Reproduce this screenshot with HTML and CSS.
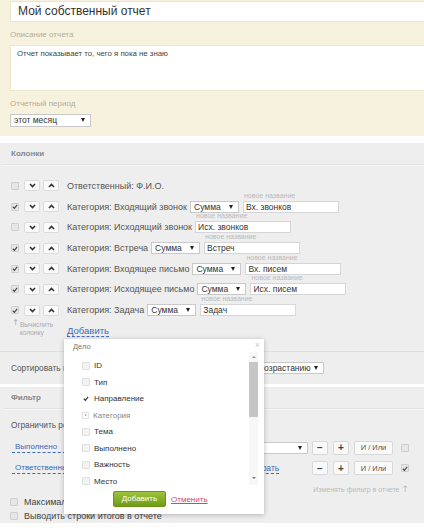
FILE: index.html
```html
<!DOCTYPE html>
<html>
<head>
  <meta charset="utf-8">
  <title>Мой собственный отчет</title>
  <link rel="stylesheet" href="styles.css">
</head>
<body>
<div class="page">

  <div class="report-head">
    <div class="title-field">Мой собственный отчет</div>
    <div class="field-label">Описание отчета</div>
    <div class="textarea">Отчет показывает то, чего я пока не знаю</div>
    <div class="field-label">Отчетный период</div>
    <div class="select period-select">этот месяц</div>
  </div>

  <div class="panel">
    <div class="panel-title">Колонки</div>
    <div class="column-list">
      <div class="column-row">
        <span class="check"></span>
        <span class="move-btn"><svg width="7" height="5" viewBox="0 0 7 5"><path d="M1 1l2.5 2.5L6 1" fill="none" stroke="#333" stroke-width="1.6"/></svg></span>
        <span class="move-btn"><svg width="7" height="5" viewBox="0 0 7 5"><path d="M1 4l2.5-2.5L6 4" fill="none" stroke="#333" stroke-width="1.6"/></svg></span>
        <span class="column-name">Ответственный: Ф.И.О.</span>
      </div>
      <div class="column-row">
        <span class="check checked"><svg width="7" height="7" viewBox="0 0 7 7"><path d="M1 3.8l1.8 1.8L6 1.5" fill="none" stroke="#444" stroke-width="1.3"/></svg></span>
        <span class="move-btn"><svg width="7" height="5" viewBox="0 0 7 5"><path d="M1 1l2.5 2.5L6 1" fill="none" stroke="#333" stroke-width="1.6"/></svg></span>
        <span class="move-btn"><svg width="7" height="5" viewBox="0 0 7 5"><path d="M1 4l2.5-2.5L6 4" fill="none" stroke="#333" stroke-width="1.6"/></svg></span>
        <span class="column-name">Категория: Входящий звонок</span>
        <span class="select agg-select">Сумма</span>
        <span class="rename"><span class="rename-hint">новое название</span><span class="text-input">Вх. звонков</span></span>
      </div>
      <div class="column-row">
        <span class="check"></span>
        <span class="move-btn"><svg width="7" height="5" viewBox="0 0 7 5"><path d="M1 1l2.5 2.5L6 1" fill="none" stroke="#333" stroke-width="1.6"/></svg></span>
        <span class="move-btn"><svg width="7" height="5" viewBox="0 0 7 5"><path d="M1 4l2.5-2.5L6 4" fill="none" stroke="#333" stroke-width="1.6"/></svg></span>
        <span class="column-name">Категория: Исходящий звонок</span>
        <span class="rename"><span class="rename-hint">новое название</span><span class="text-input">Исх. звонков</span></span>
      </div>
      <div class="column-row">
        <span class="check checked"><svg width="7" height="7" viewBox="0 0 7 7"><path d="M1 3.8l1.8 1.8L6 1.5" fill="none" stroke="#444" stroke-width="1.3"/></svg></span>
        <span class="move-btn"><svg width="7" height="5" viewBox="0 0 7 5"><path d="M1 1l2.5 2.5L6 1" fill="none" stroke="#333" stroke-width="1.6"/></svg></span>
        <span class="move-btn"><svg width="7" height="5" viewBox="0 0 7 5"><path d="M1 4l2.5-2.5L6 4" fill="none" stroke="#333" stroke-width="1.6"/></svg></span>
        <span class="column-name">Категория: Встреча</span>
        <span class="select agg-select">Сумма</span>
        <span class="rename"><span class="rename-hint">новое название</span><span class="text-input">Встреч</span></span>
      </div>
      <div class="column-row">
        <span class="check checked"><svg width="7" height="7" viewBox="0 0 7 7"><path d="M1 3.8l1.8 1.8L6 1.5" fill="none" stroke="#444" stroke-width="1.3"/></svg></span>
        <span class="move-btn"><svg width="7" height="5" viewBox="0 0 7 5"><path d="M1 1l2.5 2.5L6 1" fill="none" stroke="#333" stroke-width="1.6"/></svg></span>
        <span class="move-btn"><svg width="7" height="5" viewBox="0 0 7 5"><path d="M1 4l2.5-2.5L6 4" fill="none" stroke="#333" stroke-width="1.6"/></svg></span>
        <span class="column-name">Категория: Входящее письмо</span>
        <span class="select agg-select">Сумма</span>
        <span class="rename"><span class="rename-hint">новое название</span><span class="text-input">Вх. писем</span></span>
      </div>
      <div class="column-row">
        <span class="check checked"><svg width="7" height="7" viewBox="0 0 7 7"><path d="M1 3.8l1.8 1.8L6 1.5" fill="none" stroke="#444" stroke-width="1.3"/></svg></span>
        <span class="move-btn"><svg width="7" height="5" viewBox="0 0 7 5"><path d="M1 1l2.5 2.5L6 1" fill="none" stroke="#333" stroke-width="1.6"/></svg></span>
        <span class="move-btn"><svg width="7" height="5" viewBox="0 0 7 5"><path d="M1 4l2.5-2.5L6 4" fill="none" stroke="#333" stroke-width="1.6"/></svg></span>
        <span class="column-name">Категория: Исходящее письмо</span>
        <span class="select agg-select">Сумма</span>
        <span class="rename"><span class="rename-hint">новое название</span><span class="text-input">Исх. писем</span></span>
      </div>
      <div class="column-row">
        <span class="check checked"><svg width="7" height="7" viewBox="0 0 7 7"><path d="M1 3.8l1.8 1.8L6 1.5" fill="none" stroke="#444" stroke-width="1.3"/></svg></span>
        <span class="move-btn"><svg width="7" height="5" viewBox="0 0 7 5"><path d="M1 1l2.5 2.5L6 1" fill="none" stroke="#333" stroke-width="1.6"/></svg></span>
        <span class="move-btn"><svg width="7" height="5" viewBox="0 0 7 5"><path d="M1 4l2.5-2.5L6 4" fill="none" stroke="#333" stroke-width="1.6"/></svg></span>
        <span class="column-name">Категория: Задача</span>
        <span class="select agg-select">Сумма</span>
        <span class="rename"><span class="rename-hint">новое название</span><span class="text-input">Задач</span></span>
      </div>
    </div>

    <div class="column-footer">
      <div class="calc-hint">
        <span class="hint-arrow">↑</span>
        <span>Вычислить колонку</span>
      </div>
      <a class="dashed-link add-link">Добавить</a>
    </div>

    <div class="sort-row">
      <span>Сортировать по</span>
      <span class="select sort-field"></span>
      <span class="select sort-dir">по возрастанию</span>
    </div>
  </div>

  <div class="panel filter-panel">
    <div class="panel-title">Фильтр</div>
    <div class="filter-intro">Ограничить результаты отчета</div>
    <div class="filter-row">
      <a class="dashed-link filter-field">Выполнено</a>
      <span class="select filter-value"></span>
      <span class="op-btn">−</span>
      <span class="op-btn">+</span>
      <span class="op-btn andor">И / Или</span>
      <span class="check"></span>
    </div>
    <div class="filter-row">
      <a class="dashed-link filter-field">Ответственный</a>
      <span class="filter-value plain"><a class="dashed-link">Выбрать</a></span>
      <span class="op-btn">−</span>
      <span class="op-btn">+</span>
      <span class="op-btn andor">И / Или</span>
      <span class="check checked"><svg width="7" height="7" viewBox="0 0 7 7"><path d="M1 3.8l1.8 1.8L6 1.5" fill="none" stroke="#444" stroke-width="1.3"/></svg></span>
    </div>
    <div class="filter-hint">Изменять фильтр в отчете <span class="hint-arrow">↑</span></div>
    <div class="option-row"><span class="check"></span>Максимальное количество строк</div>
    <div class="option-row"><span class="check"></span>Выводить строки итогов в отчете</div>
  </div>

  <div class="picker">
    <div class="picker-title">Дело</div>
    <span class="picker-close">×</span>
    <div class="picker-body">
      <ul class="picker-list">
        <li><span class="check light"></span>ID</li>
        <li><span class="check light"></span>Тип</li>
        <li><span class="check bare"><svg width="7" height="7" viewBox="0 0 7 7"><path d="M1 3.8l1.8 1.8L6 1.5" fill="none" stroke="#333" stroke-width="1.3"/></svg></span>Направление</li>
        <li class="group"><span class="expander"></span>Категория</li>
        <li><span class="check light"></span>Тема</li>
        <li><span class="check light"></span>Выполнено</li>
        <li><span class="check light"></span>Важность</li>
        <li><span class="check light"></span>Место</li>
      </ul>
      <div class="scrollbar">
        <span class="scroll-up"></span>
        <span class="scroll-thumb"></span>
        <span class="scroll-down"></span>
      </div>
    </div>
    <div class="picker-actions">
      <span class="green-btn">Добавить</span>
      <a class="cancel-link">Отменить</a>
    </div>
  </div>

</div>
</body>
</html>
```
FILE: styles.css
```css
:root {
  --cream: #f7f2de;
  --panel: #eeeeee;
  --line: #dcdcdc;
  --text: #555;
  --muted: #aaa;
  --link: #3d6ab8;
}

html, body {
  margin: 0;
  overflow: hidden;
}

body {
  font-family: 'Liberation Sans', Arial, sans-serif;
  color: var(--text);
  background: #fff;
}

.page {
  position: relative;
  width: 424px;
  height: 528px;
  overflow: hidden;
}

/* report head */

.report-head {
  background: var(--cream);
  padding: 1px 0 9px 10px;
}

.title-field {
  box-sizing: border-box;
  width: 440px;
  height: 21px;
  background: #fff;
  border: 1px solid #ece6cf;
  padding-left: 7px;
  font-size: 12px;
  line-height: 19px;
  color: #333;
}

.field-label {
  margin-top: 7px;
  font-size: 8px;
  line-height: 12px;
  color: #b2ad9c;
}

.textarea {
  box-sizing: border-box;
  width: 440px;
  height: 46px;
  margin-top: 4px;
  background: #fff;
  border: 1px solid #ece6cf;
  padding: 3px 6px;
  font-size: 7.8px;
  line-height: 10px;
  color: #444;
}

.select {
  position: relative;
  box-sizing: border-box;
  display: inline-block;
  height: 12px;
  background: #fff;
  border: 1px solid #c9c9c9;
  padding: 0 12px 0 3px;
  font-size: 8.5px;
  line-height: 10px;
  color: #333;
  white-space: nowrap;
  overflow: hidden;
}

.select::after {
  content: '';
  position: absolute;
  right: 5px;
  top: 3px;
  border-top: 4px solid #222;
  border-left: 2px solid transparent;
  border-right: 2px solid transparent;
}

.period-select {
  display: block;
  width: 81px;
  height: 13px;
  margin-top: 4px;
  line-height: 11px;
}

/* panels */

.panel {
  background: var(--panel);
  margin-top: 7px;
}

.filter-panel {
  margin-top: 3px;
}

.panel-title {
  height: 21px;
  margin-left: 4px;
  padding-left: 7px;
  border-bottom: 1px solid #e2e2e2;
  box-shadow: 0 1px 0 #f6f6f6;
  font-size: 8px;
  font-weight: bold;
  line-height: 21px;
  color: #888;
}

.column-list {
  padding-top: 10.6px;
}

.column-row {
  display: flex;
  align-items: center;
  height: 20.7px;
  padding-left: 11px;
  font-size: 9px;
}

.check {
  box-sizing: border-box;
  display: inline-flex;
  align-items: center;
  justify-content: center;
  flex: none;
  width: 8px;
  height: 8px;
  background: #e6e6e6;
  border: 1px solid #cfcfcf;
  border-radius: 1px;
}

.check.light {
  background: #f3f3f3;
  border-color: #e0e0e0;
}

.check.bare {
  background: none;
  border-color: transparent;
}

.move-btn {
  box-sizing: border-box;
  display: inline-flex;
  align-items: center;
  justify-content: center;
  width: 16px;
  height: 11px;
  margin-left: 5px;
  background: #fafafa;
  border: 1px solid #dcdcdc;
  border-radius: 2px;
}

.move-btn + .move-btn {
  margin-left: 3px;
}

.column-name {
  margin-left: 8px;
  white-space: nowrap;
}

.agg-select {
  width: 49px;
  margin-left: 3px;
}

.rename {
  position: relative;
  margin-left: 4px;
}

.column-name + .rename {
  margin-left: 3px;
}

.rename-hint {
  position: absolute;
  left: 1px;
  top: -9px;
  font-size: 7px;
  line-height: 8px;
  color: #bbb;
  white-space: nowrap;
}

.text-input {
  box-sizing: border-box;
  display: block;
  width: 96px;
  height: 12px;
  background: #fff;
  border: 1px solid #d6d6d6;
  padding-left: 2px;
  font-size: 8.5px;
  line-height: 10px;
  color: #333;
}

.column-footer {
  display: flex;
  height: 30.5px;
  padding-left: 11px;
}

.calc-hint {
  display: flex;
  width: 56px;
  font-size: 6.5px;
  line-height: 8px;
  color: #aaa;
  padding-top: 1px;
}

.calc-hint .hint-arrow {
  width: 9px;
  font-family: 'DejaVu Sans', sans-serif;
  font-size: 8px;
  line-height: 8px;
  margin-top: -2px;
  text-align: center;
}

.calc-hint span:last-child {
  width: 40px;
}

.dashed-link {
  color: var(--link);
  border-bottom: 1px dashed var(--link);
  text-decoration: none;
  white-space: nowrap;
}

.add-link {
  align-self: flex-start;
  margin-top: 5px;
  font-size: 9.5px;
  line-height: 11px;
}

.sort-row {
  display: flex;
  align-items: center;
  height: 32px;
  padding-left: 11px;
  border-top: 1px solid #dedede;
  font-size: 8.3px;
  color: #555;
}

.sort-field {
  width: 163px;
  margin-left: 5px;
}

.sort-dir {
  width: 80px;
  margin-left: 4px;
}

/* filter */

.filter-intro {
  margin-top: 9px;
  padding-left: 11px;
  font-size: 8.3px;
  line-height: 14px;
}

.filter-row {
  display: flex;
  align-items: center;
  height: 20.5px;
  padding-left: 12px;
  font-size: 8px;
}

.filter-intro + .filter-row {
  margin-top: 5.5px;
}

.filter-field {
  box-sizing: border-box;
  width: 120px;
  padding: 0 3px 1px;
}

.filter-value {
  width: 172px;
  margin-left: 4px;
}

.filter-value.plain {
  box-sizing: border-box;
  padding-left: 109px;
  font-size: 8.5px;
}

.op-btn {
  box-sizing: border-box;
  display: inline-flex;
  align-items: center;
  justify-content: center;
  width: 16px;
  height: 14px;
  margin-left: 4px;
  background: #f9f9f9;
  border: 1px solid #d8d8d8;
  border-radius: 2px;
  font-size: 10px;
  font-weight: bold;
  color: #444;
}

.op-btn + .op-btn {
  margin-left: 5px;
}

.op-btn.andor {
  width: 39px;
  font-size: 7.5px;
  font-weight: normal;
  color: #555;
}

.filter-row .check {
  margin-left: 8px;
}

.filter-hint {
  margin-top: 7px;
  padding-right: 15px;
  text-align: right;
  font-size: 7px;
  line-height: 8px;
  color: #bbb;
}

.filter-hint .hint-arrow {
  font-family: 'DejaVu Sans', sans-serif;
  font-size: 9px;
}

.option-row {
  display: flex;
  align-items: center;
  gap: 6px;
  height: 14.5px;
  padding-left: 10px;
  font-size: 9px;
  color: #444;
}

/* field picker */

.picker {
  position: absolute;
  left: 64px;
  top: 339px;
  width: 200px;
  height: 175px;
  background: #fff;
  box-shadow: 0 1px 5px rgba(0, 0, 0, 0.25);
}

.picker-title {
  padding: 3px 0 0 9px;
  font-size: 7.5px;
  line-height: 10px;
  color: #777;
}

.picker-close {
  position: absolute;
  right: 4px;
  top: 1px;
  font-size: 9px;
  color: #ccc;
}

.picker-body {
  display: flex;
  height: 137px;
}

.picker-list {
  flex: 1;
  list-style: none;
  margin: 0;
  padding: 5.5px 0 0 18px;
}

.picker-list li {
  display: flex;
  align-items: center;
  gap: 4px;
  height: 16.5px;
  font-size: 8px;
  color: #333;
}

.picker-list li.group {
  color: #888;
}

.expander {
  box-sizing: border-box;
  position: relative;
  width: 7px;
  height: 7px;
  border: 1px solid #e2e2e2;
}

.expander::after {
  content: '';
  position: absolute;
  left: 2px;
  top: 1px;
  border-left: 2px solid #999;
  border-top: 1.5px solid transparent;
  border-bottom: 1.5px solid transparent;
}

.scrollbar {
  display: flex;
  flex-direction: column;
  align-items: center;
  width: 9px;
  height: 133px;
  margin-right: 6px;
  background: #f7f7f7;
}

.scroll-up,
.scroll-down {
  width: 0;
  height: 0;
  margin: 4px 0;
  border-left: 2px solid transparent;
  border-right: 2px solid transparent;
}

.scroll-up {
  border-bottom: 2px solid #999;
}

.scroll-down {
  margin-top: auto;
  margin-bottom: 6px;
  border-top: 2px solid #777;
}

.scroll-thumb {
  width: 9px;
  height: 55px;
  background: #c6c6c6;
}

.picker-actions {
  display: flex;
  align-items: center;
  padding: 2px 0 0 49px;
}

.green-btn {
  width: 53px;
  height: 16px;
  border-radius: 2px;
  background: linear-gradient(#9cc43c, #6f9c18);
  border: 1px solid #6b9416;
  box-sizing: border-box;
  font-size: 8px;
  line-height: 14px;
  text-align: center;
  color: #fff;
}

.cancel-link {
  margin-left: 5px;
  font-size: 8px;
  color: #d04a5c;
  text-decoration: underline;
}
```
